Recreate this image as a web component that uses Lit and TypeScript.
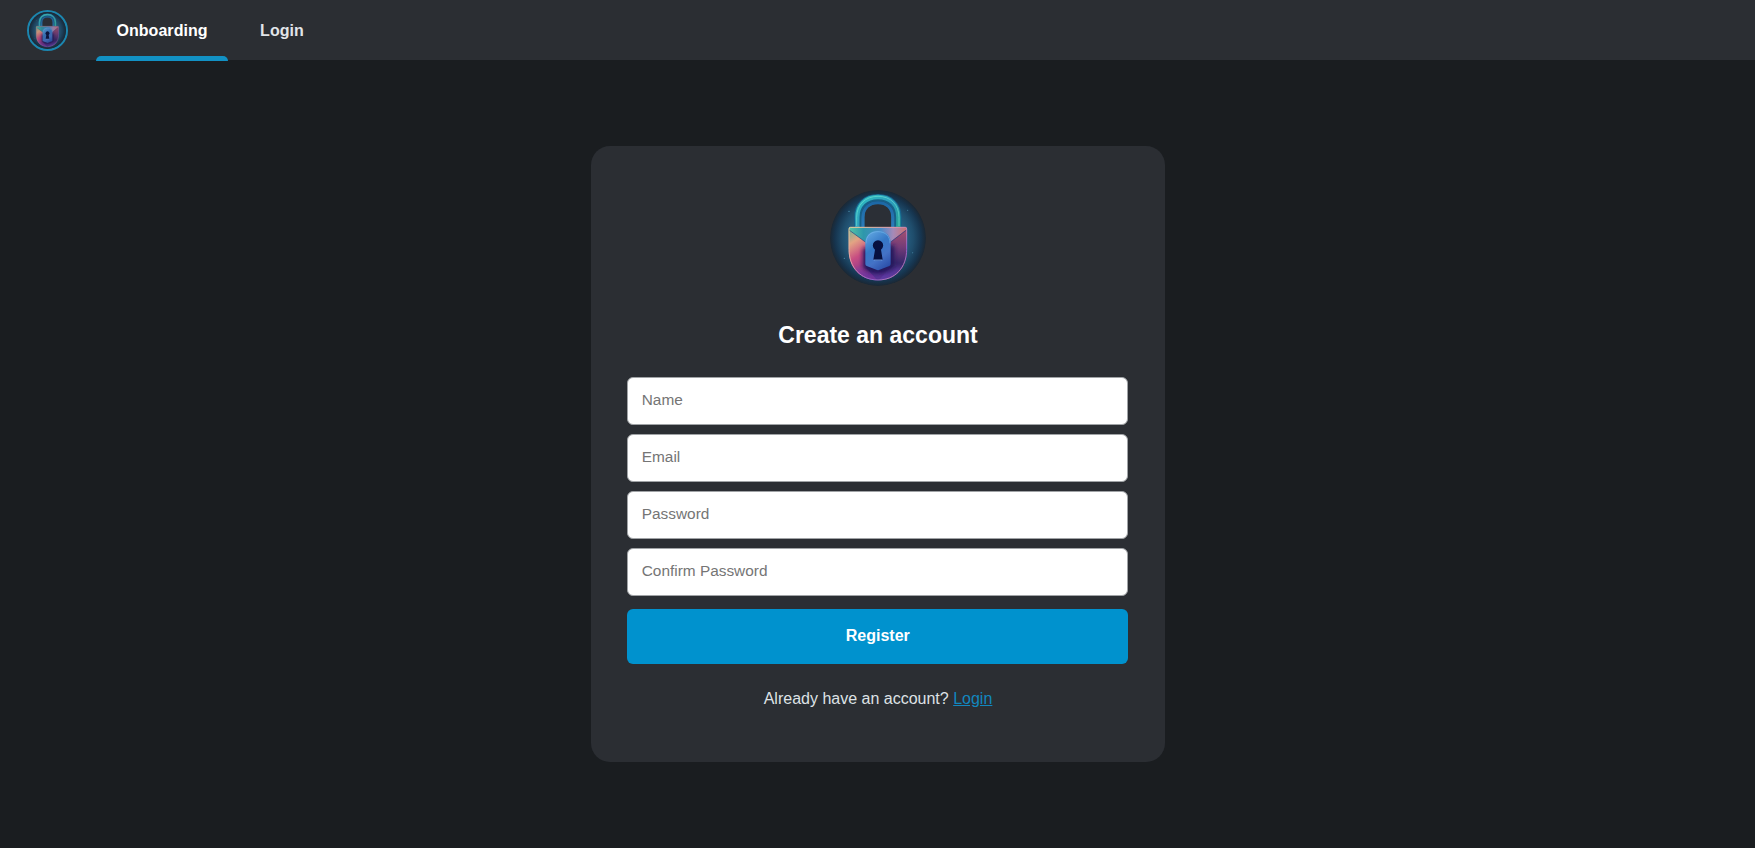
import { LitElement, html, css, svg } from "lit";
import { customElement } from "lit/decorators.js";

@customElement("lock-logo")
class LockLogo extends LitElement {
  static styles = css`
    :host { display: block; border-radius: 50%; overflow: hidden; }
    svg { display: block; width: 100%; height: 100%; }
  `;
  render() {
    return html`<svg viewBox="29 30 288 288" aria-hidden="true">${svg`
      <defs>
        <radialGradient id="disc" cx="173" cy="174" r="144" gradientUnits="userSpaceOnUse">
          <stop offset="0.5" stop-color="#2a668a"/><stop offset="0.74" stop-color="#1f4d6c"/>
          <stop offset="0.9" stop-color="#16344e"/><stop offset="1" stop-color="#1b2733"/>
        </radialGradient>
        <linearGradient id="shackle" x1="0" y1="0" x2="1" y2="1">
          <stop offset="0" stop-color="#31bfc0"/><stop offset="0.5" stop-color="#2c9dbd"/><stop offset="1" stop-color="#27a397"/>
        </linearGradient>
        <linearGradient id="inner" x1="0" y1="0" x2="0" y2="1">
          <stop offset="0" stop-color="#1c68a6"/><stop offset="1" stop-color="#2b7cba"/>
        </linearGradient>
        <linearGradient id="flap" x1="86" y1="0" x2="260" y2="0" gradientUnits="userSpaceOnUse">
          <stop offset="0" stop-color="#55c6a6"/><stop offset="0.25" stop-color="#2e97ab"/>
          <stop offset="0.55" stop-color="#4a8bc9"/><stop offset="0.76" stop-color="#a58ab8"/><stop offset="1" stop-color="#cf716f"/>
        </linearGradient>
        <linearGradient id="right" x1="0" y1="0" x2="0" y2="1">
          <stop offset="0" stop-color="#a8526f"/><stop offset="0.35" stop-color="#743c78"/><stop offset="0.65" stop-color="#38276b"/><stop offset="1" stop-color="#5a3aa0"/>
        </linearGradient>
        <linearGradient id="left" x1="0" y1="0" x2="0.35" y2="1">
          <stop offset="0" stop-color="#5cb598"/><stop offset="0.3" stop-color="#e3a483"/>
          <stop offset="0.58" stop-color="#c84d82"/><stop offset="1" stop-color="#75308f"/>
        </linearGradient>
        <linearGradient id="edge" x1="0" y1="0" x2="1" y2="1">
          <stop offset="0" stop-color="#f0cf98"/><stop offset="0.4" stop-color="#dd98a8"/>
          <stop offset="0.7" stop-color="#8f60c8"/><stop offset="1" stop-color="#d89a9c"/>
        </linearGradient>
        <linearGradient id="plate" x1="0.2" y1="0" x2="0.7" y2="1">
          <stop offset="0" stop-color="#5fa5e0"/><stop offset="0.4" stop-color="#3578c6"/>
          <stop offset="0.7" stop-color="#4472c6"/><stop offset="1" stop-color="#2c50aa"/>
        </linearGradient>
        <clipPath id="bodyClip"><path d="M90 141H255Q260 141 260 147V208C260 264 225 301 173 301S85 264 85 208V147Q85 141 90 141Z"/></clipPath>
        <filter id="soft" x="-30%" y="-30%" width="160%" height="160%"><feGaussianBlur stdDeviation="7"/></filter>
      </defs>
      <circle cx="173" cy="174" r="144" fill="url(#disc)"/>
      <g fill="#4f91b0"><circle cx="86" cy="94" r="2"/><circle cx="72" cy="235" r="1.800"/><circle cx="262" cy="91" r="1.500"/><circle cx="277" cy="218" r="1.500"/></g>
      <path d="M132 141V112C132 87 149 71 173 71S214 87 214 112V141Z" fill="#2b2f36"/>
      <path d="M112 141V112C112 76 137 53 173 53S233 76 233 112V141" fill="none" stroke="#16608a" stroke-width="22"/>
      <path d="M111 141V112C111 75 136 51 173 51S234 75 234 112V141" fill="none" stroke="url(#shackle)" stroke-width="13"/>
      <path d="M109 138V112C109 74 135 49 173 49S236 74 236 112V138" fill="none" stroke="#7ff0dc" stroke-opacity="0.500" stroke-width="3"/>
      <path d="M128 141V112C128 84 147 68 173 68S217 84 217 112V141" fill="none" stroke="url(#inner)" stroke-width="9"/>
      <g clip-path="url(#bodyClip)">
        <rect x="84" y="140" width="178" height="164" fill="#4a2b80"/>
        <path d="M84 140L142 190L136 262L173 304H84Z" fill="url(#left)"/>
        <path d="M262 145L206 190L210 262L173 304H262Z" fill="url(#right)"/>
        <path d="M128 205V264Q173 300 222 258V195Z" fill="#24165b" filter="url(#soft)"/>
        <path d="M85 141H260V147L207 189H139L85 149Z" fill="url(#flap)"/>
        <path d="M85 149L139 189M260 149L207 189" stroke="#2b3d80" stroke-opacity="0.650" stroke-width="3" fill="none"/>
        <path d="M107 268Q133 294 173 294T241 266" stroke="#7040b4" stroke-width="14" fill="none" opacity="0.550" filter="url(#soft)"/>
      </g>
      <path d="M90 142H255Q259 142 259 147V208C259 263 224 300 173 300S86 263 86 208V147Q86 142 90 142Z" fill="none" stroke="url(#edge)" stroke-width="3"/>
      <path d="M135 190C135 166 150 153 173 153S211 166 211 190V252Q211 256 207 258L176 270Q173 271 170 270L139 258Q135 256 135 252Z" fill="url(#plate)"/>
      <path d="M137 190C137 168 151 155 173 155S209 168 209 190" fill="none" stroke="#80c1ef" stroke-opacity="0.500" stroke-width="3"/>
      <path d="M164 209A15.500 15.500 0 1 1 182 209L187 239Q173 243 159 239Z" fill="#07103f"/>
      <path d="M160 240H186" stroke="#79a7ea" stroke-width="2.500"/>
    `}</svg>`;
  }
}

@customElement("app-root")
class AppRoot extends LitElement {
  static styles = css`
    :host { display: flex; flex-direction: column; height: 848px; background: #1a1d20; color: #dee2e6; font: 16px/24px "Liberation Sans", Arial, sans-serif; }
    * { box-sizing: border-box; }
    .nav { height: 60px; flex: none; display: flex; align-items: stretch; gap: 12px; padding-left: 27px; background: #2b2e33; }
    .brand { width: 41px; height: 41px; margin: 10px 16px 0 0; flex: none; border: 2px solid #1b86b0; border-radius: 50%; }
    .brand lock-logo { width: 37px; height: 37px; opacity: 0.85; }
    .tab { height: 61px; padding: 19px 20px 0 20.500px; color: #e2e5e9; font-weight: 700; letter-spacing: 0.040px; text-decoration: none; display: flex; flex-direction: column; justify-content: space-between; }
    .tab.active { color: #fff; }
    .tab.active::after { content: ""; height: 5px; margin: 0 -20px 0 -20.500px; background: #1291c4; border-radius: 5px 5px 0 0; }
    .main { flex: 1; display: flex; justify-content: center; align-items: flex-start; padding: 86px 0 0 1px; }
    .card { width: 574px; height: 616px; padding: 44px 36.500px 0; background: #2b2e33; border-radius: 19px; display: flex; flex-direction: column; align-items: center; }
    .hero { width: 96px; height: 96px; flex: none; }
    h1 { margin: 34px 0 27px; font-size: 23px; line-height: 30px; color: #fff; }
    form { width: 501px; margin-left: -0.500px; display: flex; flex-direction: column; gap: 9px; }
    input { width: 100%; height: 48px; padding: 0 13px 2px 13.500px; border: 1px solid #a0a3a6; border-radius: 6px; background: #fff; font: 15.400px "Liberation Sans", Arial, sans-serif; }
    input::placeholder { color: #757575; opacity: 1; }
    button { height: 55px; margin-top: 4px; border: 0; border-radius: 6px; padding: 0 0 2px; background: #0092ce; color: #fff; font: 700 16px "Liberation Sans", Arial, sans-serif; }
    .foot { margin: 23px 0 0; }
    .foot a { color: #1287bf; }
  `;
  private fields = [["text", "Name"], ["email", "Email"], ["password", "Password"], ["password", "Confirm Password"]];
  render() {
    return html`
      <nav class="nav">
        <div class="brand"><lock-logo></lock-logo></div>
        <a class="tab active" href="#"><span>Onboarding</span></a>
        <a class="tab" href="#"><span>Login</span></a>
      </nav>
      <main class="main">
        <section class="card">
          <lock-logo class="hero"></lock-logo>
          <h1>Create an account</h1>
          <form>
            ${this.fields.map(([type, label]) => html`<input type=${type} placeholder=${label} aria-label=${label} />`)}
            <button type="button">Register</button>
          </form>
          <p class="foot">Already have an account? <a href="#">Login</a></p>
        </section>
      </main>`;
  }
}
